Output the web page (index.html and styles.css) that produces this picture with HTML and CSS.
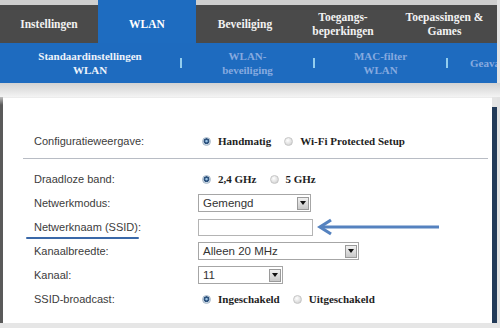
FILE: index.html
```html
<!DOCTYPE html>
<html lang="nl">
<head>
  <meta charset="UTF-8">
  <meta name="viewport" content="width=device-width, initial-scale=1.0">
  <title>WLAN - Standaardinstellingen</title>
  <link rel="stylesheet" href="styles.css">
</head>
<body>
  <nav class="tabs">
    <div class="tab">Instellingen</div>
    <div class="tab active">WLAN</div>
    <div class="tab">Beveiliging</div>
    <div class="tab">Toegangs-<br>beperkingen</div>
    <div class="tab last">Toepassingen &amp;<br>Games</div>
  </nav>

  <nav class="subnav">
    <div class="sub current">Standaardinstellingen<br>WLAN</div>
    <div class="sep"></div>
    <div class="sub">WLAN-<br>beveiliging</div>
    <div class="sep"></div>
    <div class="sub">MAC-filter<br>WLAN</div>
    <div class="sep"></div>
    <div class="sub more">Geavanceerde</div>
  </nav>

  <div class="strip"></div>

  <div class="panel">
    <div class="panel-left"></div>
    <main class="panel-body">
      <div class="row">
        <span class="label">Configuratieweergave:</span>
        <div class="radios">
          <span class="radio on"></span><b>Handmatig</b>
          <span class="radio"></span><b>Wi-Fi Protected Setup</b>
        </div>
      </div>

      <hr class="rule">

      <div class="row">
        <span class="label">Draadloze band:</span>
        <div class="radios">
          <span class="radio on"></span><b>2,4 GHz</b>
          <span class="radio"></span><b>5 GHz</b>
        </div>
      </div>
      <div class="row">
        <span class="label">Netwerkmodus:</span>
        <div class="select w-mode"><span>Gemengd</span><i class="drop"></i></div>
      </div>
      <div class="row">
        <span class="label marked">Netwerknaam (SSID):</span>
        <div class="with-arrow">
          <div class="input"></div>
          <svg class="pointer" width="124" height="18" viewBox="0 0 124 18">
            <path d="M5 9 H122" stroke="#5582bf" stroke-width="3" fill="none"/>
            <path d="M14 2 L3 9 L14 16" stroke="#5582bf" stroke-width="3.2" fill="none" stroke-linejoin="miter"/>
          </svg>
        </div>
      </div>
      <div class="row">
        <span class="label">Kanaalbreedte:</span>
        <div class="select w-width"><span>Alleen 20 MHz</span><i class="drop"></i></div>
      </div>
      <div class="row">
        <span class="label">Kanaal:</span>
        <div class="select w-chan"><span>11</span><i class="drop"></i></div>
      </div>
      <div class="row">
        <span class="label">SSID-broadcast:</span>
        <div class="radios">
          <span class="radio on"></span><b>Ingeschakeld</b>
          <span class="radio"></span><b>Uitgeschakeld</b>
        </div>
      </div>
    </main>
    <div class="panel-right"></div>
    <div class="panel-edge"></div>
  </div>

  <div class="foot"></div>
</body>
</html>
```

FILE: styles.css
```css
body {
  margin: 0;
  width: 500px;
  height: 328px;
  overflow: hidden;
  background: #e4e4e4;
  font-family: 'Liberation Sans', Arial, sans-serif;
  color: #3a3a3a;
}
.tabs {
  display: flex;
  height: 43px;
  width: 497px;
  background: #4a4a4a;
}
.tab {
  width: 98px;
  box-sizing: border-box;
  border-top: 5px solid #cfcfcf;
  display: flex;
  align-items: center;
  justify-content: center;
  text-align: center;
  color: #f2f2f2;
  font: bold 11.5px/14px 'Liberation Serif', serif;
}
.tab.active {
  background: #1e6cc0;
  border-top-color: #1e6cc0;
  color: #fff;
}
.tab.last {
  flex: 1;
}
.subnav {
  display: flex;
  align-items: center;
  height: 40px;
  width: 497px;
  background: #1e6bbf;
  overflow: hidden;
  font: bold 11px/14px 'Liberation Serif', serif;
}
.sub {
  width: 131px;
  text-align: center;
  color: #86aadf;
  flex-shrink: 0;
}
.sub.current {
  width: 180px;
  color: #eef3fb;
}
.sub.more {
  width: auto;
  padding-left: 22px;
  white-space: nowrap;
}
.sep {
  width: 2px;
  height: 10px;
  background: #93cdee;
  flex-shrink: 0;
}
.strip {
  height: 14px;
  background: linear-gradient(#d2d2d2, #e9e9e9 70%, #f4f4f4);
}
.panel {
  display: flex;
  height: 226px;
}
.panel-left {
  width: 3px;
  background: linear-gradient(#bdbdbd, #5a5a5a 8px, #5a5a5a);
}
.panel-body {
  flex: 1;
  background: #fff;
  border-top: 1px solid #ececec;
  padding: 31px 0 0 31px;
}
.panel-right {
  width: 5px;
  margin-top: 10px;
  background: #223a58;
}
.panel-edge {
  width: 3px;
  background: #e2e2e2;
}
.foot {
  height: 5px;
  background: #e6e6e6;
}
.row {
  display: grid;
  grid-template-columns: 164px 1fr;
  align-items: center;
  height: 24px;
  font-size: 11px;
}
.label {
  color: #3c3c3c;
  line-height: 14px;
}
.label.marked {
  position: relative;
  justify-self: start;
}
.label.marked::after {
  content: "";
  position: absolute;
  left: -8px;
  right: 2px;
  bottom: -5px;
  height: 2px;
  border-radius: 1px;
  background: #3a68a8;
}
.rule {
  border: 0;
  border-top: 1px solid #b8bcc4;
  margin: 5px 4px 8px -11px;
}
.radios {
  display: flex;
  align-items: center;
  padding-left: 4px;
  font: bold 11px 'Liberation Serif', serif;
  color: #1e1e1e;
}
.radios b {
  margin: 0 13px 0 7px;
}
.radio {
  width: 9px;
  height: 9px;
  border-radius: 50%;
  box-sizing: border-box;
  border: 1px solid #c6c6c6;
  background: radial-gradient(circle at 40% 35%, #ffffff, #e2e2e2 55%, #c4c4c4);
}
.radio.on {
  border-color: #a8b8c8;
  background: radial-gradient(circle at 50% 45%, #9cc4e6 0 0.8px, #2e537e 1.6px 2.6px, #c9d7e4 3.2px);
}
.select {
  display: flex;
  align-items: center;
  height: 18px;
  box-sizing: border-box;
  border: 1px solid #a6a6a6;
  padding-left: 4px;
  font-size: 11.5px;
  color: #333;
}
.select span {
  flex: 1;
}
.w-mode { width: 113px; }
.w-width { width: 161px; }
.w-chan { width: 85px; }
.drop {
  width: 12px;
  height: 13px;
  margin-right: 1px;
  box-sizing: border-box;
  border: 1px solid #9a9a9a;
  background: linear-gradient(#f0f0f0, #c9c9c9);
  display: flex;
  align-items: center;
  justify-content: center;
}
.drop::before {
  content: "";
  border-left: 3.5px solid transparent;
  border-right: 3.5px solid transparent;
  border-top: 4px solid #111;
}
.with-arrow {
  display: flex;
  align-items: center;
}
.input {
  width: 115px;
  height: 17px;
  box-sizing: border-box;
  border: 1px solid #b4b4b4;
  background: #fff;
}
.pointer {
  margin-left: 4px;
}
```
